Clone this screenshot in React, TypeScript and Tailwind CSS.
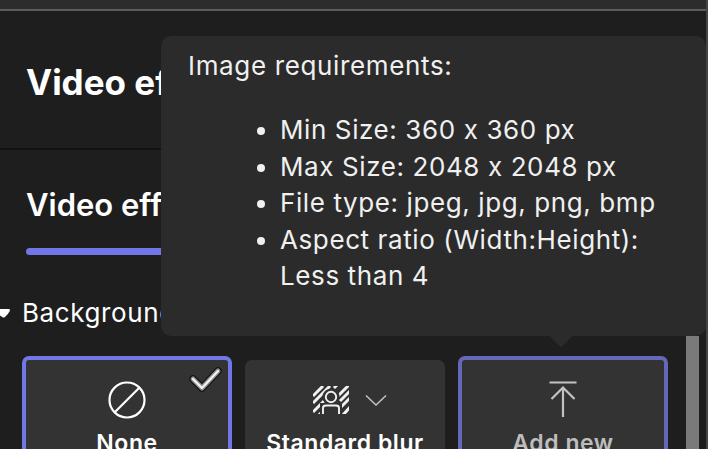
const font = { fontFamily: "Inter, 'Noto Sans', sans-serif", fontFeatureSettings: "'calt' 0" };

function Card({ cls, icon, label, labelCls }: { cls: string; icon: React.ReactNode; label: string; labelCls: string }) {
  return (
    <div className={`relative flex flex-col items-center rounded-[7px] bg-[#333333] overflow-hidden ${cls}`}>
      {icon}
      <div className={`text-[23px] font-semibold leading-[26px] tracking-[0.55px] whitespace-nowrap ${labelCls}`}>{label}</div>
    </div>
  );
}

function BlurIcon() {
  return (
    <svg width="36" height="28" viewBox="0 0 36 28" fill="none" stroke="#f2f2f2" strokeWidth="3">
      <clipPath id="blurclip"><rect x="0" y="0" width="36" height="28" /></clipPath>
      <g clipPath="url(#blurclip)">
        <path d="M0 10 L10 0 M0 17 L17 0 M0 26 L11 15 M5 30 L10 25 M21 2 L24 -1 M24 11 L36 -1 M27 15 L38 4 M27 22 L38 11 M30 29 L38 20" />
      </g>
      <circle cx="18" cy="11" r="8.6" fill="#333333" stroke="none" />
      <rect x="7" y="17" width="22" height="12" fill="#333333" stroke="none" />
      <circle cx="18" cy="11" r="5.2" strokeWidth="1.9" />
      <path d="M10 28 V22 Q10 19.5 13 19.5 H23 Q26 19.5 26 22 V28" strokeWidth="1.9" />
    </svg>
  );
}

export default function App() {
  return (
    <div className="relative w-[708px] h-[449px] overflow-hidden bg-[#1e1e1e] text-white" style={font}>
      <div className="h-[9px] bg-[#2c2c2c]" />
      <div className="h-[2px] bg-[#5c5c5c]" />

      <div className="h-[139px] flex items-center pl-[26px] pt-[6px] border-b-2 border-[#111111]">
        <div className="text-[35px] font-bold leading-none whitespace-nowrap">Video effects</div>
      </div>

      <div className="pl-[26px] pt-[37px]">
        <div className="text-[31px] font-semibold leading-[36px] whitespace-nowrap">Video effects</div>
        <div className="mt-[25px] h-[7px] w-[300px] rounded-full bg-[#7276e8]" />
      </div>

      <div className="flex items-center mt-[43px] h-[30px]">
        <svg width="10" height="9" viewBox="0 0 10 9" className="shrink-0"><path d="M0 0 H8.5 Q10.5 0 9.8 2 Q8 5.5 5 8 Q3.8 9 2.5 8.2 Q1 7.4 0 6.5 Z" fill="#ffffff" /></svg>
        <div className="ml-[12px] text-[26px] leading-[30px] tracking-[0.6px] whitespace-nowrap">Background</div>
      </div>

      <div className="flex items-start pl-[22px] pt-[32px] gap-[13px]">
        <Card
          cls="w-[210px] h-[120px] -mt-[4px] border-[4px] border-[#7277e6] pt-[21px]"
          icon={
            <>
              <svg width="38" height="38" viewBox="0 0 38 38" fill="none" stroke="#ffffff" strokeWidth="2.2">
                <circle cx="19" cy="19" r="17.5" />
                <path d="M7 31 L31 7" />
              </svg>
              <svg width="34" height="28" viewBox="0 0 34 28" fill="none" strokeLinecap="round" strokeLinejoin="round" className="absolute left-[163px] top-[6px]">
                <path d="M4 13 L13 22 L29 5" stroke="#141414" strokeWidth="7.5" />
                <path d="M4 13 L13 22 L29 5" stroke="#8c8c8c" strokeWidth="5" />
                <path d="M4 13 L13 22 L29 5" stroke="#f4f4f4" strokeWidth="2.2" />
              </svg>
            </>
          }
          label="None"
          labelCls="mt-[11px] text-white"
        />
        <Card
          cls="w-[200px] h-[120px] pt-[25px]"
          icon={
            <div className="flex items-center h-[30px] ml-[10px]">
              <BlurIcon />
              <svg width="22" height="12" viewBox="0 0 22 12" fill="none" stroke="#bdbdbd" strokeWidth="1.6" className="ml-[16px]">
                <path d="M1 1.5 L11 11 L21 1.5" />
              </svg>
            </div>
          }
          label="Standard blur"
          labelCls="mt-[15px] text-white"
        />
        <Card
          cls="w-[210px] h-[120px] -mt-[4px] border-[4px] border-[#6568b8] pt-[20px]"
          icon={
            <svg width="30" height="38" viewBox="0 0 30 38" fill="none" stroke="#c2c2c2" strokeWidth="2.2" className="mt-[1px]">
              <path d="M1.5 1.5 H28.5" />
              <path d="M15 36 V6.5" />
              <path d="M3.5 18 L15 6.5 L26.5 18" />
            </svg>
          }
          label="Add new"
          labelCls="mt-[11px] text-[#bdbdbd]"
        />
      </div>

      <div className="absolute left-[686px] top-[336px] w-[13px] h-[113px] bg-[#7a7a7a]" />

      <div className="absolute left-[161px] top-[36px] w-[545px] h-[300px] rounded-[10px] bg-[#2b2b2b] pl-[27px] pt-[12px] text-[#f0f0f0]">
        <div className="text-[26px] leading-[36px] tracking-[0.65px] whitespace-nowrap">Image requirements:</div>
        <ul className="mt-[28px] list-disc pl-[92px] pr-[40px] text-[26px] leading-[36.5px] tracking-[0.6px]">
          <li>Min Size: 360 x 360 px</li>
          <li>Max Size: 2048 x 2048 px</li>
          <li>File type: jpeg, jpg, png, bmp</li>
          <li>Aspect ratio (Width:Height):<br />Less than 4</li>
        </ul>
        <div className="absolute left-[388px] -bottom-[11px] w-[24px] h-[24px] rotate-45 rounded-[4px] bg-[#2b2b2b] scale-75" />
      </div>
      <div className="absolute right-0 top-0 w-[2px] h-[449px] bg-[#444444]" />
    </div>
  );
}
